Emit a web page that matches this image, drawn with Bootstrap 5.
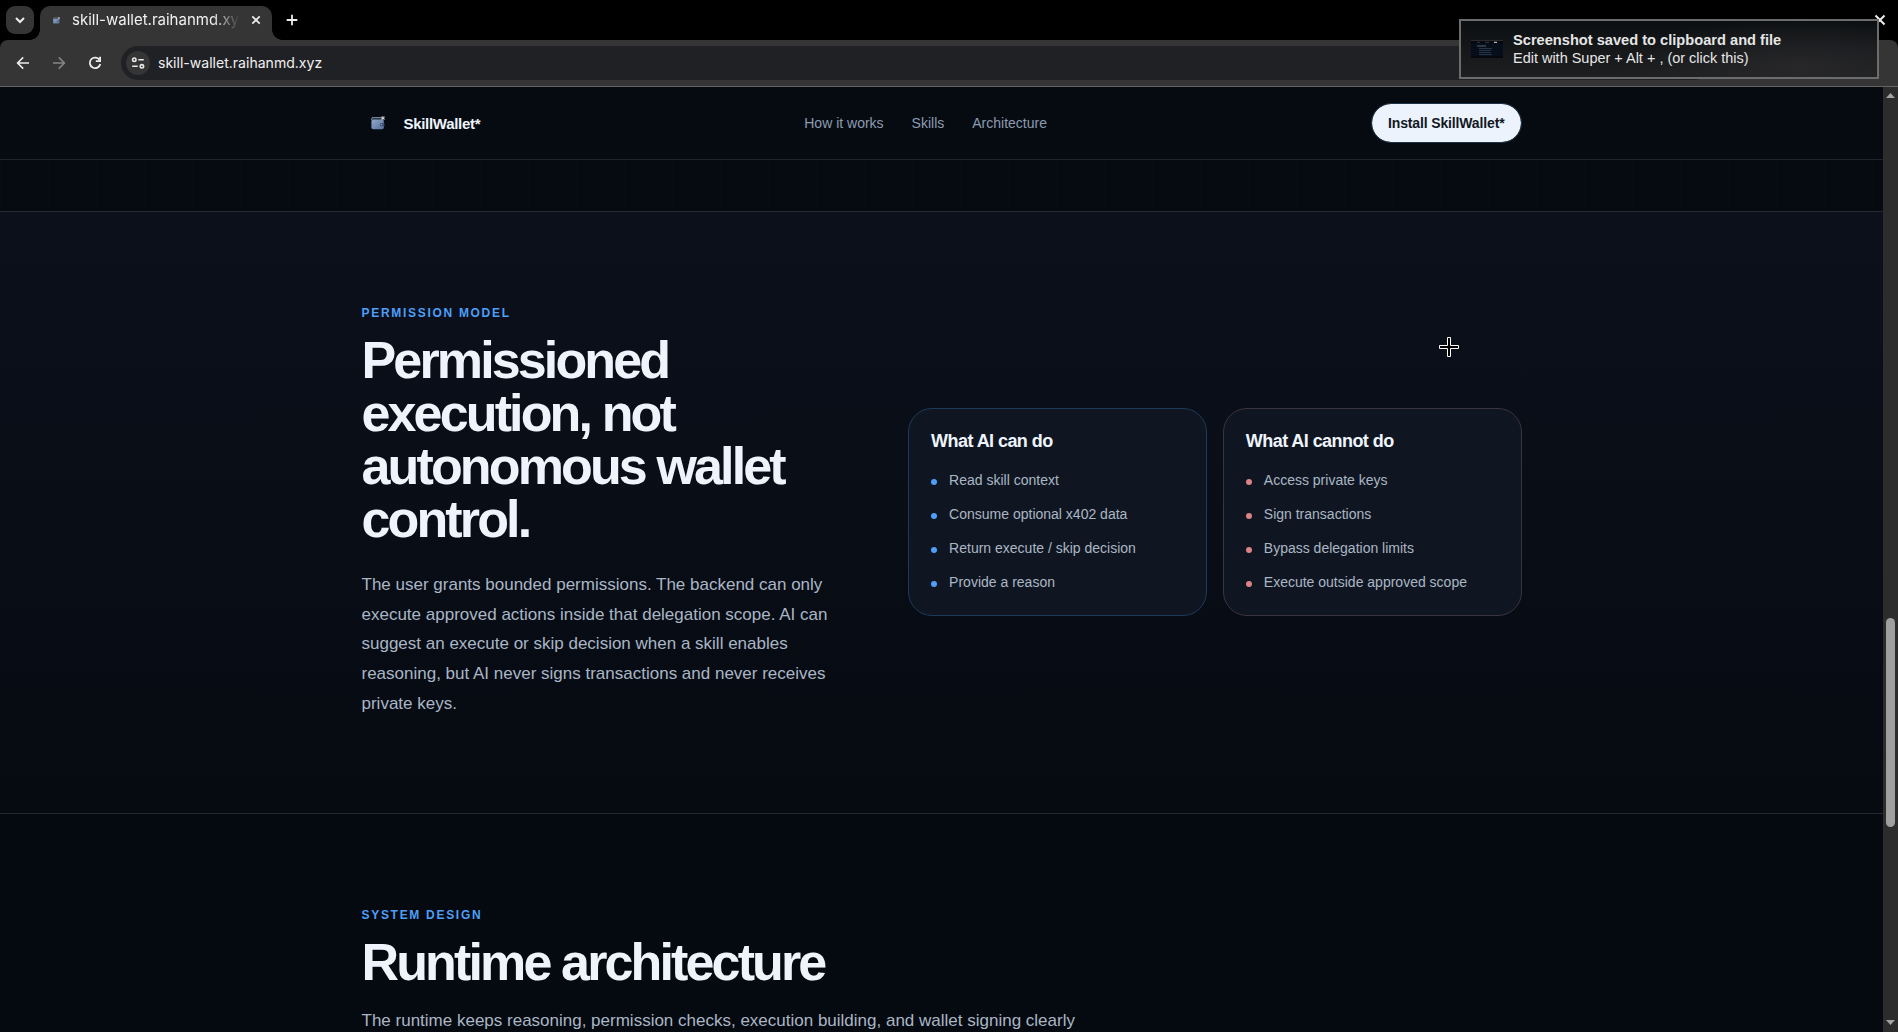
<!DOCTYPE html>
<html lang="en">
<head>
<meta charset="utf-8">
<title>SkillWallet*</title>
<link href="https://cdn.jsdelivr.net/npm/bootstrap@5.3.0/dist/css/bootstrap.min.css" rel="stylesheet">
<style>
body{background:#000;font-family:"Liberation Sans",Arial,sans-serif;color:#eef4fc;width:1898px;height:1032px;overflow:hidden}
svg{display:block;flex:none}
/* browser chrome */
.tabstrip{height:40px;padding-left:6px;background:#000;font-family:Inter,sans-serif}
.tabmenu{width:28px;height:28px;border-radius:9px;background:#353535;margin:6px 6px 6px 0}
.tab{position:relative;width:232px;height:34px;margin-top:6px;border-radius:10px 10px 0 0;background:#353535;font-size:15px;color:#f1f1f1}
.tab::before,.tab::after{content:"";position:absolute;bottom:0;width:10px;height:10px}
.tab::before{left:-10px;background:radial-gradient(circle at 0 0,transparent 9.5px,#353535 10px)}
.tab::after{right:-10px;background:radial-gradient(circle at 100% 0,transparent 9.5px,#353535 10px)}
.tabtitle{width:168px;line-height:28px;white-space:nowrap;overflow:hidden;margin-left:12px;-webkit-mask-image:linear-gradient(90deg,#000 140px,transparent 168px)}
.toolbar{height:47px;background:#353535;border-bottom:1px solid #646464;border-radius:8px 8px 0 0;padding:6px 0 6px 15px}
.omni{width:1590px;height:34px;border-radius:17px;background:#202125;padding-left:5px;font:14.05px Inter,sans-serif;color:#f0f0f0;margin-left:18px}
.omni span{padding-bottom:2px}
.tune{width:24px;height:24px;border-radius:50%;background:#353535;margin-right:8px}
/* page */
.viewport{height:945px}
.page{width:1883px;background:linear-gradient(#060b12,#050a10)}
.wrap{width:1160px;margin:0 auto}
.topbar{height:73px;border-bottom:1px solid #1f252e;background:#060b12}
.brandname{font-size:15px;letter-spacing:-.3px;font-weight:700;color:#eef4fc;padding-top:2px}
.menu{gap:28px;font-size:14px;color:#8c9bb0}
.install{height:40px;border:1px solid #1f3347;border-radius:20px;background:#edf3fc;color:#111824;font-size:14px;font-weight:700;letter-spacing:-.14px;padding:0 16px;background-clip:padding-box}
.gridlines{background-image:linear-gradient(90deg,rgba(148,163,184,.014) 1px,transparent 1px);background-size:48px 100%}
.spacer{height:51px}
.permission{height:603px;border-top:1px solid #232934;border-bottom:1px solid #242a35;padding-top:94px;background:linear-gradient(#0b101b,#060b12)}
.eyebrow{font-size:12px;line-height:14px;letter-spacing:1.7px;font-weight:700;color:#4d9ff8;margin-bottom:13.8px}
.headline{font-size:52px;line-height:53.04px;letter-spacing:-2.86px;font-weight:700;color:#eef3fc;margin-bottom:24px}
.copy{font-size:17px;line-height:29.75px;color:#aab6c5;margin:0}
.intro{width:500px}
.rules{width:613.4px;gap:16px}
.rulecard{flex:1;border:1px solid #1d3a5b;border-radius:24px;background:#101621;padding:22px}
.rulecard.deny{border-color:#3b333e}
.rulecard h3{font-size:18px;line-height:19.8px;letter-spacing:-.56px;font-weight:700;margin:1px 0 17px;color:#eef4fc}
.rulecard ul{gap:12px;font-size:14px;line-height:22px;color:#aab6c5}
.rulecard li{display:flex;gap:12px}
.rulecard li::before{content:"";width:6px;height:6px;border-radius:50%;background:#4d9ff8;margin-top:9.5px}
.rulecard.deny li::before{background:#dc8385}
.design{padding-top:94px}
.design .headline{margin-bottom:17.2px}
.design .copy{white-space:nowrap}
.scroller{width:15px;background:#2c2c2c;padding:6px 3px 7px}
.thumb{width:9px;height:209px;border-radius:5px;background:#9f9f9f;margin-top:520px}
/* overlays */
.notice{position:absolute;left:1459px;top:19px;width:420px;height:60px;border:2px solid #6b6d6c;background:radial-gradient(ellipse 180px 50px at 340px 48px,#27272a,transparent),linear-gradient(#0c0f11,#1e1f21);font-size:14.63px;line-height:18px;color:#e6e6e6;padding:0 0 0 10px}
.notice .t2{font-size:14.48px}
.winclose{position:absolute;left:1874px;top:14px}
.cross{position:absolute;left:1439px;top:337px}
</style>
<script src="https://cdn.jsdelivr.net/npm/bootstrap@5.3.0/dist/js/bootstrap.bundle.min.js"></script>
</head>
<body>
<svg width="0" height="0" class="position-absolute"><defs>
<linearGradient id="wg" x1="0" y1="0" x2="1" y2="1"><stop offset="0" stop-color="#93a8c8"/><stop offset="1" stop-color="#57719b"/></linearGradient>
<symbol id="wallet" viewBox="0 0 14 14"><path d="M1 2.2h9.5v1.5H1z" fill="#27364a"/><path d="M.7 4V2.6Q.7 1.6 2 1.6h8" fill="none" stroke="#a7b4c5" stroke-width=".8"/><rect x=".4" y="3.6" width="12.4" height="9.6" rx="1.8" fill="url(#wg)"/><rect x="8.8" y="7" width="4.8" height="3.2" rx="1.5" fill="#3b5275"/><circle cx="10.4" cy="8.6" r=".7" fill="#9eb2cf"/><path d="M11.9 0v4.2M10 1l3.8 2.3M13.8 1 10 3.3" stroke="#dfe4ec" stroke-width=".9"/></symbol>
</defs></svg>

<div class="tabstrip d-flex">
  <div class="tabmenu d-flex align-items-center justify-content-center"><svg width="12" height="12" viewBox="0 0 12 12" fill="none" stroke="#eee" stroke-width="2"><path d="M2 4l4 4 4-4"/></svg></div>
  <div class="tab d-flex align-items-start">
    <svg width="7" height="7" style="margin:11px 0 0 13px"><use href="#wallet"/></svg>
    <div class="tabtitle">skill-wallet.raihanmd.xyz</div>
    <svg width="10" height="10" viewBox="0 0 10 10" fill="none" stroke="#eee" stroke-width="1.7" style="margin:9px 0 0 11px"><path d="M1.3 1.3l7.4 7.4M8.7 1.3L1.3 8.7"/></svg>
  </div>
  <svg width="12" height="12" viewBox="0 0 12 12" stroke="#eee" stroke-width="1.8" style="margin:14px 0 0 14px"><path d="M6 .7v10.6M.7 6h10.6"/></svg>
</div>
<div class="toolbar d-flex align-items-center">
  <svg width="16" height="16" viewBox="0 0 16 16" fill="none" stroke="#ececec" stroke-width="1.6"><path d="M14 8H3M8.2 2.4L2.6 8l5.6 5.6"/></svg>
  <svg class="ms-3" width="20" height="16" viewBox="-4 0 20 16" fill="none" stroke="#858585" stroke-width="1.6"><path d="M2 8h11M7.8 2.4L13.4 8l-5.6 5.6"/></svg>
  <svg width="16" height="16" viewBox="0 0 16 16" fill="none" stroke="#ececec" stroke-width="1.8" style="margin-left:20px"><path d="M12.6 5A5.3 5.3 0 1 0 13.3 9"/><path d="M13.1 1.8v4.4H8.8"/></svg>
  <div class="omni d-flex align-items-center">
    <div class="tune d-flex align-items-center justify-content-center"><svg width="14" height="14" viewBox="0 0 14 14" fill="none" stroke="#e8e8e8" stroke-width="1.6"><circle cx="3.3" cy="3.7" r="1.7"/><path d="M7.3 3.7h5.5M1.2 10.3h5.5"/><circle cx="10.9" cy="10.3" r="1.7"/></svg></div>
    <span>skill-wallet.raihanmd.xyz</span>
  </div>
</div>

<div class="viewport d-flex">
  <div class="page overflow-hidden">
    <header class="topbar">
      <div class="wrap h-100 d-flex align-items-center justify-content-between">
        <div class="d-flex align-items-center"><svg width="14" height="14" style="margin:0 19px 0 9px"><use href="#wallet"/></svg><span class="brandname">SkillWallet*</span></div>
        <nav class="menu d-flex"><span>How it works</span><span>Skills</span><span>Architecture</span></nav>
        <button class="install">Install SkillWallet*</button>
      </div>
    </header>
    <div class="spacer gridlines"></div>
    <section class="permission">
      <div class="wrap d-flex justify-content-between">
        <div class="intro">
          <div class="eyebrow">PERMISSION MODEL</div>
          <h2 class="headline">Permissioned<br>execution, not<br>autonomous wallet<br>control.</h2>
          <p class="copy">The user grants bounded permissions. The backend can only<br>execute approved actions inside that delegation scope. AI can<br>suggest an execute or skip decision when a skill enables<br>reasoning, but AI never signs transactions and never receives<br>private keys.</p>
        </div>
        <div class="rules d-flex align-self-center">
          <div class="rulecard"><h3>What AI can do</h3><ul class="list-unstyled d-flex flex-column mb-0"><li>Read skill context</li><li>Consume optional x402 data</li><li>Return execute / skip decision</li><li>Provide a reason</li></ul></div>
          <div class="rulecard deny"><h3>What AI cannot do</h3><ul class="list-unstyled d-flex flex-column mb-0"><li>Access private keys</li><li>Sign transactions</li><li>Bypass delegation limits</li><li>Execute outside approved scope</li></ul></div>
        </div>
      </div>
    </section>
    <section class="design">
      <div class="wrap">
        <div class="eyebrow">SYSTEM DESIGN</div>
        <h2 class="headline">Runtime architecture</h2>
        <p class="copy">The runtime keeps reasoning, permission checks, execution building, and wallet signing clearly</p>
      </div>
    </section>
  </div>
  <div class="scroller d-flex flex-column">
    <svg width="9" height="5" viewBox="0 0 9 5"><path d="M0 5L4.5 0 9 5z" fill="#a3a3a3"/></svg>
    <div class="thumb"></div>
    <svg class="mt-auto" width="9" height="5" viewBox="0 0 9 5"><path d="M0 0l4.5 5L9 0z" fill="#a3a3a3"/></svg>
  </div>
</div>

<svg class="winclose" width="12" height="12" viewBox="0 0 12 12" stroke="#eee" stroke-width="2"><path d="M1.5 1.5l9 9M10.5 1.5l-9 9"/></svg>
<div class="notice d-flex align-items-center">
  <svg width="32" height="18" viewBox="0 0 32 18"><path fill="#070e1b" d="M0 0h32v18H0z"/><path fill="#2c2c2e" d="M0 0h32v1.2H0z"/><path fill="#05080d" d="M0 1.2h32v2H0zM0 16h32v2H0z"/><path fill="#ddd" d="M23 1.8h3v1h-3z"/><path stroke="#3d4859" stroke-width=".8" d="M6 2.3h3M14 2.3h4"/><path stroke="#596371" stroke-width="1" d="M6 6h9"/><path stroke="#2c3a4c" stroke-width=".9" d="M8 8.5h13M8 10.6h12M8 12.6h12M8 14.6h13"/></svg>
  <div style="margin-left:10px"><div class="fw-bold">Screenshot saved to clipboard and file</div><div class="t2">Edit with Super + Alt + , (or click this)</div></div>
</div>
<svg class="cross" width="20" height="20" viewBox="0 0 20 20"><path d="M8.5 .5h3v8h8v3h-8v8h-3v-8h-8v-3h8z" fill="#000" stroke="#fff"/></svg>
</body>
</html>
